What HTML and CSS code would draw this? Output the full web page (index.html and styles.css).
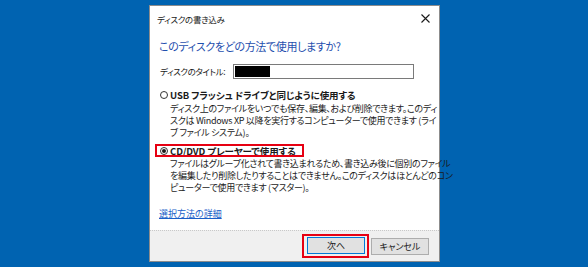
FILE: index.html
```html
<!DOCTYPE html>
<html lang="ja">
<head>
<meta charset="utf-8">
<title>ディスクの書き込み</title>
<link rel="stylesheet" href="styles.css">
</head>
<body>
<div class="dialog">
  <div class="titlebar">
    <span class="title">ディスクの書き込み</span>
    <svg class="close" width="9" height="9" viewBox="0 0 9 9"><path d="M0.5 0.5 L8.5 8.5 M8.5 0.5 L0.5 8.5" stroke="#1a1a1a" stroke-width="1.1" fill="none"/></svg>
  </div>
  <div class="content">
    <h1 class="heading">このディスクをどの方法で使用しますか?</h1>
    <div class="name-row">
      <span class="name-label">ディスクのタイトル:</span>
      <span class="name-input"><span class="redact"></span></span>
    </div>
    <div class="option">
      <div class="opt-head"><span class="radio"></span><span class="opt-label">USB フラッシュ ドライブと同じように使用する</span></div>
      <p class="opt-desc">ディスク上のファイルをいつでも保存、編集、および削除できます。このディ<br>スクは Windows XP 以降を実行するコンピューターで使用できます (ライ<br>ブ ファイル システム)。</p>
    </div>
    <div class="option opt2">
      <div class="opt-head hl"><span class="radio checked"></span><span class="opt-label">CD/DVD プレーヤーで使用する</span></div>
      <p class="opt-desc">ファイルはグループ化されて書き込まれるため、書き込み後に個別のファイル<br>を編集したり削除したりすることはできません。このディスクはほとんどのコン<br>ピューターで使用できます (マスター)。</p>
    </div>
    <a class="link" href="#">選択方法の詳細</a>
  </div>
  <div class="footer">
    <span class="btn-mark"><button class="btn default">次へ</button></span>
    <button class="btn">キャンセル</button>
  </div>
</div>
</body>
</html>
```

FILE: styles.css
```css
* { box-sizing: border-box; }
html, body { margin: 0; padding: 0; }
body {
  width: 588px;
  height: 267px;
  background: #0063b1;
  padding: 5px 0 0 149px;
  font-family: "Noto Sans CJK JP", "Noto Sans", sans-serif;
  font-feature-settings: "palt";
  color: #1a1a1a;
  overflow: hidden;
}
.dialog {
  width: 291px;
  height: 257px;
  background: #fff;
  border: 1px solid #8c8c8c;
  display: flex;
  flex-direction: column;
}
.titlebar {
  height: 25px;
  display: flex;
  align-items: center;
  justify-content: space-between;
  padding: 0 9px 0 7px;
}
.title { font-size: 8.5px; line-height: 12px; letter-spacing: -0.3px; }
.close { display: block; }
.content {
  flex: 1;
  padding: 0 0 0 10px;
  display: flex;
  flex-direction: column;
  align-items: flex-start;
}
.heading {
  margin: 7px 0 0 -1px;
  font-size: 11px;
  line-height: 16px;
  font-weight: 400;
  color: #1f4fae;
  letter-spacing: -0.35px;
}
.name-row {
  margin-top: 9px;
  display: flex;
  align-items: center;
  height: 16px;
}
.name-label { width: 73px; font-size: 8.5px; letter-spacing: -0.4px; }
.name-input {
  width: 181px;
  height: 15px;
  border: 1px solid #7a7a7a;
  padding: 1px;
  display: flex;
}
.redact { width: 35px; height: 11px; background: #000; }
.option { margin-top: 10px; display: flex; flex-direction: column; align-items: flex-start; }
.opt2 { margin-top: 6px; }
.opt-head {
  display: flex;
  align-items: center;
  height: 12px;
  gap: 2px;
}
.opt-head.hl {
  margin-left: -4px;
  padding: 0 7px 0 4px;
  height: 11px;
  outline: 2px solid #e60012;
  outline-offset: -1px;
}
.radio {
  width: 8px;
  height: 8px;
  border: 1px solid #333;
  border-radius: 50%;
  background: #fff;
  flex: none;
  display: flex;
  align-items: center;
  justify-content: center;
}
.radio.checked::after {
  content: "";
  width: 4px;
  height: 4px;
  border-radius: 50%;
  background: #1a1a1a;
}
.opt-label { font-size: 9.5px; font-weight: 700; letter-spacing: -0.1px; }
.opt-desc {
  margin: 2px 0 0 10px;
  font-size: 9px;
  line-height: 12px;
  letter-spacing: -0.3px;
  white-space: nowrap;
}
.link {
  margin-top: 14px;
  font-size: 9px;
  line-height: 12px;
  color: #1a5fc8;
  text-decoration: underline;
  margin-left: -1px;
}
.footer {
  height: 31px;
  background: #f0f0f0;
  border-top: 1px dotted #c8c8c8;
  display: flex;
  align-items: center;
  justify-content: flex-end;
  padding: 0 10px 0 0;
  gap: 2px;
}
.btn-mark {
  display: flex;
  border: 2px solid #e60012;
  padding: 1px 2px 2px 3px;
}
.btn {
  width: 58px;
  height: 17px;
  padding: 0;
  background: #e1e1e1;
  border: 1px solid #adadad;
  font-family: "Noto Sans CJK JP", "Noto Sans", sans-serif;
  font-feature-settings: "palt";
  font-size: 9px;
  color: #1a1a1a;
  line-height: 15px;
}
.btn.default { border-color: #0078d7; box-shadow: inset 0 0 0 1px #e1e1e1; }
```
